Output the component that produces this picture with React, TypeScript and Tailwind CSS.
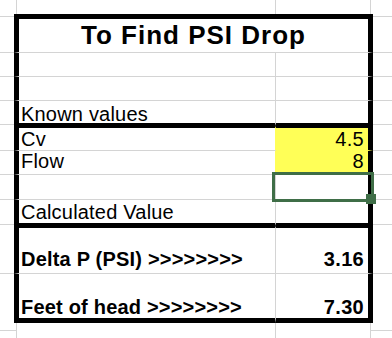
const GRID = "border-[#d4d4d4]";

type RowProps = {
	h: string;
	label?: string;
	value?: string;
	bold?: boolean;
	pb?: string;
	topThick?: boolean;
	bottom: "grid" | "half" | "thick";
	sideLine?: string;
	yellow?: boolean;
	selected?: boolean;
};

function OuterRow({ h, line }: { h: string; line?: boolean }) {
	return (
		<div className={`flex ${h}`}>
			<div className={`w-[17px] border-r ${GRID}`}>{line && <div className={`h-[8px] border-b ${GRID}`} />}</div>
			<div className={`w-[259px] border-r ${GRID}`} />
			<div className={`w-[95px] border-r ${GRID}`} />
			<div className="flex-1">{line && <div className={`h-[8px] border-b ${GRID}`} />}</div>
		</div>
	);
}

function Row({ h, label, value, bold, pb = "pb-0", topThick, bottom, sideLine = "border-b", yellow, selected }: RowProps) {
	const bBottom =
		bottom === "thick"
			? "border-b-[5px] border-b-black"
			: bottom === "half"
				? "border-b-[3px] border-b-black"
				: `border-b border-b-[#d4d4d4]`;
	const top = topThick ? "border-t-2 border-t-black" : "";
	const text = bold ? "font-bold" : "font-normal";

	return (
		<div className={`flex ${h}`}>
			<div className={`w-[14px] ${sideLine} ${GRID}`} />
			<div
				className={`w-[262px] border-l-[5px] border-l-black border-r ${yellow ? "border-r-[#ffff57]" : "border-r-[#d4d4d4]"} ${top} ${bBottom} flex items-end pl-[2px] ${pb}`}
			>
				{label && <span className={`text-[20px] leading-[17px] tracking-[0.2px] whitespace-nowrap ${text}`}>{label}</span>}
			</div>
			<div
				className={`relative w-[97px] border-r-[5px] border-r-black ${top} ${bBottom} ${yellow ? "bg-[#ffff57] border-b-[#ffff57]" : ""} flex items-end justify-end pr-[4px] ${pb}`}
			>
				{value && <span className={`text-[20px] leading-[17px] tracking-[0.3px] ${text}`}>{value}</span>}
				{selected && (
					<>
						<div className="absolute z-10 left-[-4px] top-[-3px] w-[102px] h-[30px] border-[3px] border-[#3f6e47]" />
						<div className="absolute z-10 left-[90px] top-[19px] w-[10px] h-[10px] bg-[#3f6e47]" />
					</>
				)}
			</div>
			<div className={`flex-1 ${sideLine} ${GRID}`} />
		</div>
	);
}

export default function App() {
	return (
		<div className="w-[392px] h-[338px] overflow-hidden bg-white text-black font-['Liberation_Sans',Arial,sans-serif] flex flex-col">
			<OuterRow h="h-[14px]" />

			<div className="flex h-[39px]">
				<div className={`w-[14px] mt-[2px] border-y ${GRID}`} />
				<div className="w-[359px] border-x-[5px] border-t-[5px] border-black border-b border-b-[#d4d4d4] flex items-end justify-center pb-[4px]">
					<span className="text-[26px] leading-[26px] font-bold tracking-[1px] whitespace-nowrap">To Find PSI Drop</span>
				</div>
				<div className={`flex-1 mt-[2px] border-y ${GRID}`} />
			</div>

			<Row h="h-[24px]" bottom="grid" />
			<Row h="h-[24px]" bottom="grid" />
			<Row h="h-[25px]" bottom="half" label="Known values" sideLine="mb-[1px] border-b" />
			<Row h="h-[25px]" bottom="grid" topThick label="Cv" value="4.5" pb="pb-[2px]" yellow />
			<Row h="h-[24px]" bottom="grid" label="Flow" value="8" pb="pb-[4px]" yellow />
			<Row h="h-[25px]" bottom="grid" selected />
			<Row h="h-[26px]" bottom="half" label="Calculated Value" pb="pb-[2px]" sideLine="mb-[1px] border-b" />
			<Row h="h-[48px]" bottom="grid" topThick bold label="Delta P (PSI) >>>>>>>>" value="3.16" pb="pb-[5px]" />
			<Row h="h-[49px]" bottom="thick" bold label="Feet of head >>>>>>>>" value="7.30" pb="pb-[2px]" sideLine="" />

			<OuterRow h="h-[15px]" line />
		</div>
	);
}
